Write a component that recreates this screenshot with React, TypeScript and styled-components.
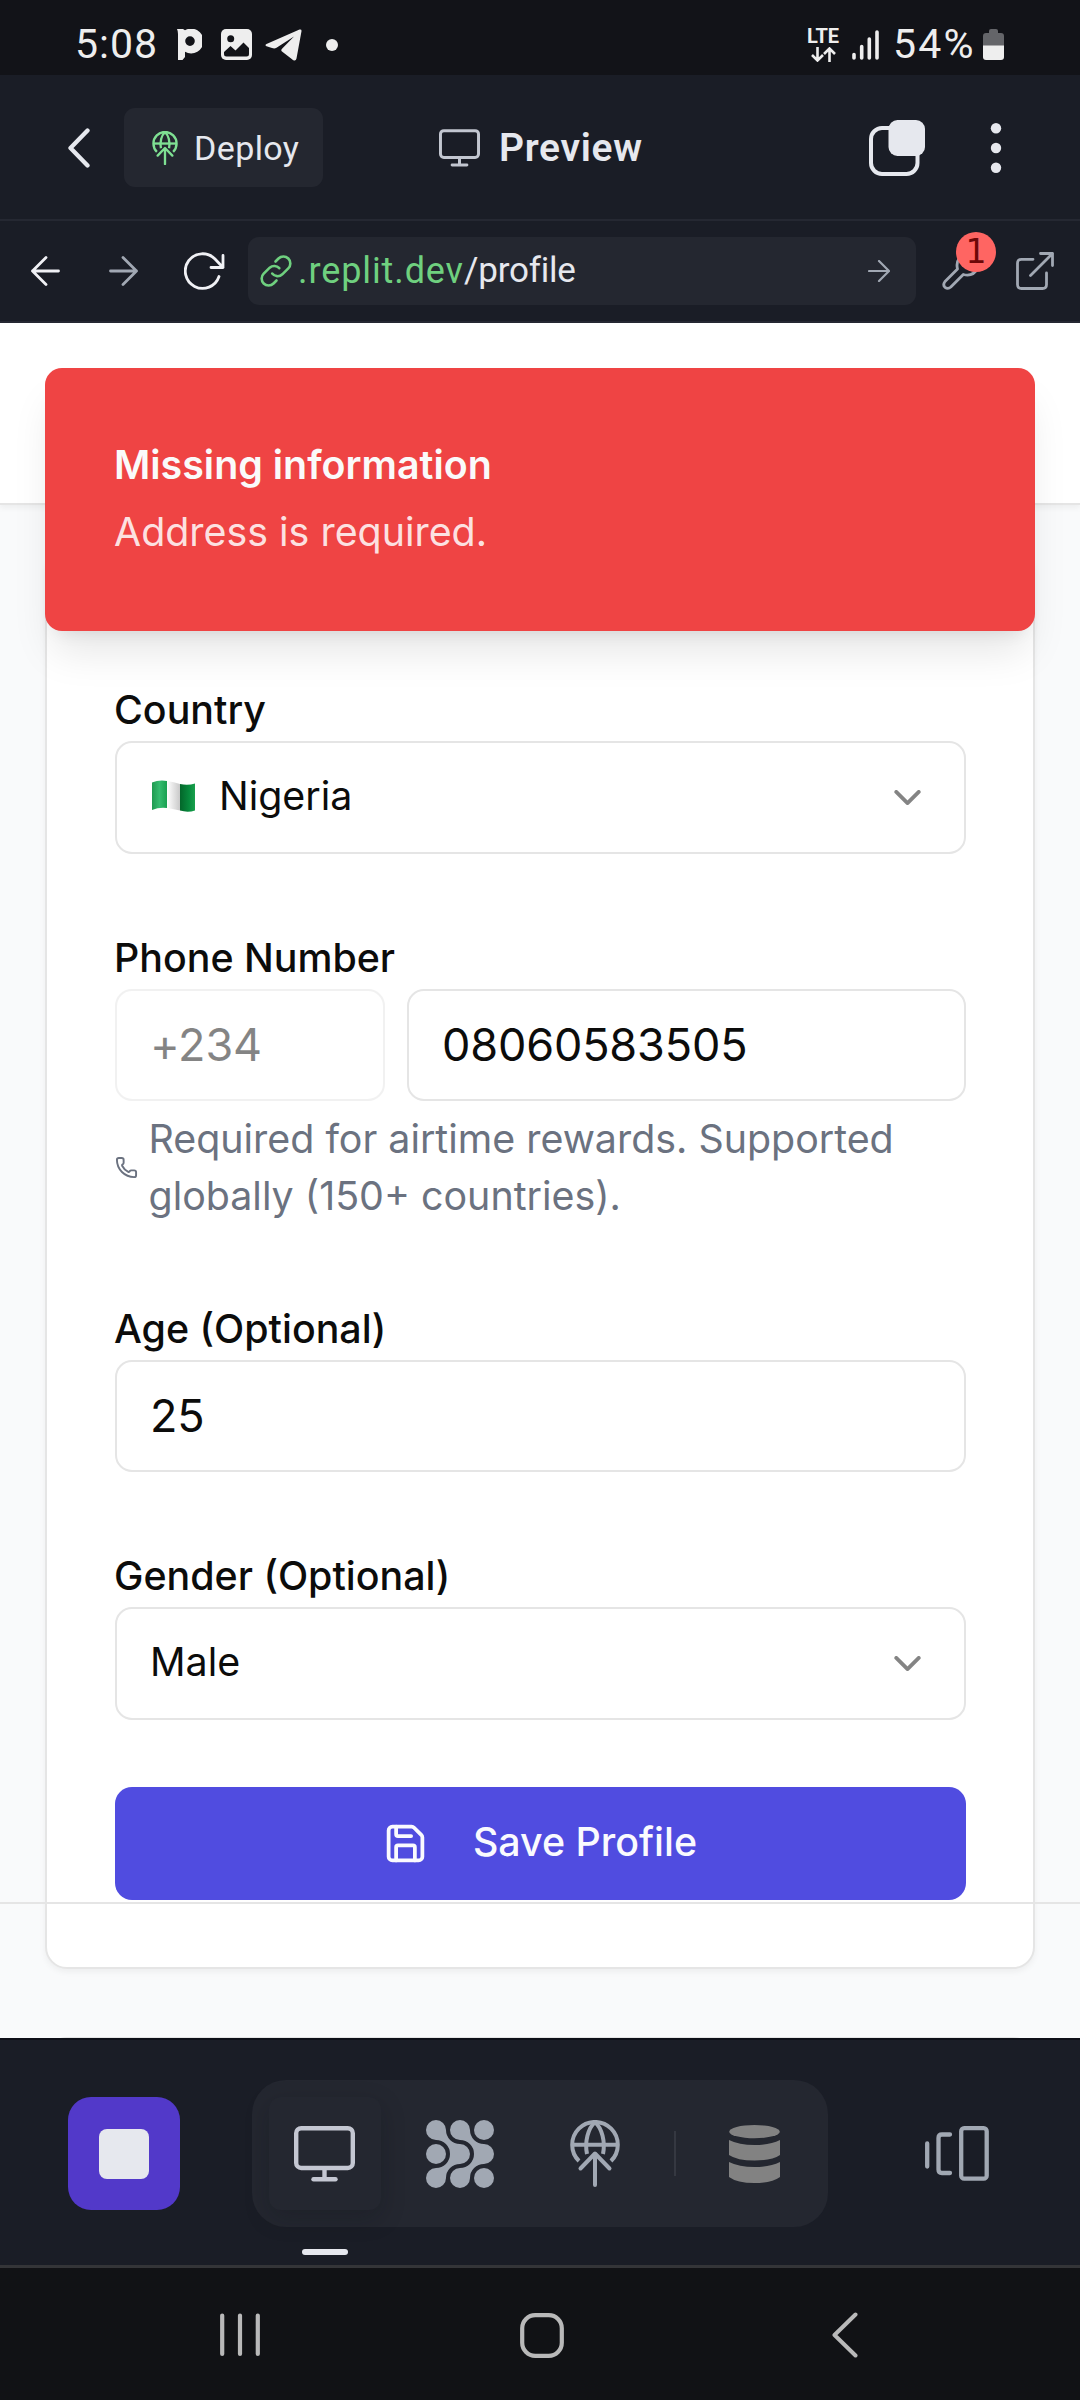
import React from 'react';
import styled, { createGlobalStyle } from 'styled-components';
import { ChevronDown, Phone, Save } from 'lucide-react';

const ink = '#e6e8ee';
const muted = '#a1a8b3';
const panel = '#1a1d26';
const raised = '#242730';
const line = '#e5e5e5';

const GlobalStyle = createGlobalStyle`
  * { box-sizing: border-box; }
  body { margin: 0; background: ${panel}; }
  svg { display: block; flex: none; }
  button, input { font: inherit; border: 0; margin: 0; padding: 0; background: none; color: inherit; }
`;

const Screen = styled.div`
  width: 1080px;
  height: 2400px;
  display: flex;
  flex-direction: column;
  overflow: hidden;
  font-family: Inter, 'Liberation Sans', sans-serif;
`;

/* ---------- status bar ---------- */

const StatusBar = styled.div`
  flex: none;
  height: 75px;
  padding: 14px 76px 0 75px;
  display: flex;
  align-items: center;
  justify-content: space-between;
  background: #121318;
  color: #eee;
`;

const StatusGroup = styled.div`
  display: flex;
  align-items: center;
`;

const StatusText = styled.span<{ $width: number; $tracking: number }>`
  width: ${(p) => p.$width}px;
  margin-top: -2px;
  font: 400 41px/46px Roboto, sans-serif;
  letter-spacing: ${(p) => p.$tracking}px;
  white-space: nowrap;
`;

const Spacer = styled.span<{ $w: number }>`
  flex: none;
  width: ${(p) => p.$w}px;
`;

const Network = styled.div`
  width: 34px;
  height: 34px;
  display: flex;
  flex-direction: column;
  align-items: center;
  gap: 3px;
  font: 700 20px/16px Roboto, sans-serif;
`;

/* ---------- app header ---------- */

const Header = styled.header`
  flex: none;
  height: 146px;
  padding: 1px 78px 0 68px;
  display: flex;
  align-items: center;
  background: ${panel};
  border-bottom: 2px solid #252832;
`;

const DeployButton = styled.button`
  width: 199px;
  height: 79px;
  margin-left: 34px;
  padding: 0 0 0 28px;
  display: flex;
  align-items: center;
  gap: 16px;
  border-radius: 11px;
  background: ${raised};
  color: ${ink};
  font: 400 34px/40px Roboto, sans-serif;
  letter-spacing: 0.4px;
`;

const Title = styled.div`
  margin-left: 116px;
  display: flex;
  align-items: center;
  gap: 19px;
  color: ${ink};
  font: 600 39px/46px Roboto, sans-serif;
  letter-spacing: 0.7px;
`;

const HeaderActions = styled.div`
  margin-left: auto;
  display: flex;
  align-items: center;
  gap: 65px;
`;

/* ---------- address bar ---------- */

const AddressBar = styled.div`
  flex: none;
  height: 102px;
  padding: 0 26px 0 31px;
  display: flex;
  align-items: center;
  background: ${panel};
  border-bottom: 2px solid #252832;
`;

const AddressField = styled.div`
  width: 669px;
  height: 68px;
  margin-left: 23px;
  padding: 0 26px 0 12px;
  display: flex;
  align-items: center;
  border-radius: 11px;
  background: ${raised};
  color: ${ink};
  font: 400 36px/44px Roboto, sans-serif;
`;

const Host = styled.span`
  margin-left: 6px;
  color: #6fd07f;
  letter-spacing: 0.9px;
`;

const Path = styled.span`
  flex: 1;
  font-size: 35px;
  letter-spacing: -0.2px;
`;

const Tools = styled.div`
  position: relative;
  margin-left: 26px;
`;

const Badge = styled.span`
  position: absolute;
  left: 14px;
  top: -20px;
  width: 40px;
  height: 40px;
  border-radius: 50%;
  background: #ff6562;
  color: #6d0808;
  font: 400 33px/40px 'DejaVu Sans', sans-serif;
  text-align: center;
`;

/* ---------- previewed page ---------- */

const Viewport = styled.main`
  position: relative;
  flex: none;
  height: 1715px;
  display: flex;
  flex-direction: column;
  overflow: hidden;
  background: #f9fafb;
  color: #0c0c0b;
`;

const SiteNav = styled.div`
  flex: none;
  height: 182px;
  background: #fff;
  border-bottom: 2px solid ${line};
  box-shadow: 0 3px 6px rgba(0, 0, 0, 0.05);
`;

const Card = styled.section`
  flex: none;
  margin: 45px 45px 0;
  padding: 121px 67px 67px 68px;
  display: flex;
  flex-direction: column;
  gap: 67px;
  background: #fff;
  border: 2px solid ${line};
  border-radius: 22px;
  box-shadow: 0 3px 6px rgba(0, 0, 0, 0.05);
`;

const NextCard = styled.section`
  flex: none;
  height: 60px;
  margin: 68px 45px 0;
  background: #fff;
  border: 2px solid ${line};
  border-radius: 22px;
`;

const Toast = styled.div`
  position: absolute;
  left: 45px;
  right: 45px;
  top: 45px;
  height: 263px;
  padding: 69px;
  border-radius: 17px;
  background: #ef4444;
  box-shadow: 0 28px 42px -8px rgba(0, 0, 0, 0.1), 0 11px 17px -11px rgba(0, 0, 0, 0.1);
  font-size: 39.375px;
  line-height: 56px;
`;

const ToastTitle = styled.div`
  margin-bottom: 11px;
  color: #fafafa;
  font-weight: 600;
`;

const ToastText = styled.div`
  color: rgba(255, 255, 255, 0.86);
`;

const FooterRule = styled.div`
  position: absolute;
  left: 0;
  right: 0;
  top: 1579px;
  height: 2px;
  background: ${line};
`;

const Field = styled.div`
  display: flex;
  flex-direction: column;
`;

const Label = styled.label`
  height: 68px;
  padding-top: 9px;
  margin-left: -1px;
  font-size: 39.375px;
  font-weight: 500;
  line-height: 56px;
`;

const Select = styled.button`
  width: 100%;
  height: 113px;
  padding: 0 34px 4px 33px;
  display: flex;
  align-items: center;
  border: 2px solid ${line};
  border-radius: 17px;
  background: #fff;
  font-size: 39.375px;
  line-height: 56px;
`;

const SelectValue = styled.span`
  flex: 1;
  text-align: left;
`;

const ChevronSlot = styled.span`
  padding-top: 4px;
  opacity: 0.5;
`;

const InputRow = styled.div`
  display: flex;
  gap: 22px;
`;

const Input = styled.input<{ $width?: number }>`
  min-width: 0;
  ${(p) => (p.$width ? `flex: none; width: ${p.$width}px;` : 'flex: 1;')}
  height: 112px;
  padding: 0 34px 2px 33px;
  border: 2px solid ${line};
  border-radius: 17px;
  background: #fff;
  font-size: 45px;
  line-height: 68px;
  letter-spacing: -0.15px;
  &:disabled {
    opacity: 0.5;
    color: inherit;
  }
`;

const Hint = styled.div`
  height: 114px;
  margin-top: 10px;
  padding-bottom: 2px;
  display: flex;
  align-items: center;
  gap: 10.500px;
  color: #6b7280;
  font-size: 39.375px;
  line-height: 57px;
`;

const SaveButton = styled.button`
  width: 100%;
  height: 113px;
  padding-right: 1px;
  display: flex;
  align-items: center;
  justify-content: center;
  gap: 45px;
  border-radius: 17px;
  background: #504ce0;
  color: #fafafe;
  font-size: 39.375px;
  font-weight: 500;
  line-height: 56px;
`;

const SaveText = styled.span`
  padding-bottom: 4px;
`;

/* ---------- workspace dock ---------- */

const Dock = styled.div`
  flex: none;
  height: 230px;
  padding-left: 68px;
  display: flex;
  align-items: flex-start;
  background: ${panel};
  border-top: 2px solid #0e1018;
  border-bottom: 3px solid #343538;
`;

const StopButton = styled.button`
  width: 112px;
  height: 113px;
  margin-top: 57px;
  display: flex;
  align-items: center;
  justify-content: center;
  border-radius: 23px;
  background: #5239c9;
`;

const StopGlyph = styled.span`
  width: 50px;
  height: 50px;
  border-radius: 8px;
  background: ${ink};
`;

const TabGroup = styled.div`
  width: 576px;
  height: 147px;
  margin: 40px 0 0 72px;
  padding-left: 17px;
  display: flex;
  align-items: center;
  border-radius: 34px;
  background: ${raised};
`;

const ActiveTab = styled.div`
  position: relative;
  width: 112px;
  height: 113px;
  padding-right: 1px;
  display: flex;
  align-items: center;
  justify-content: center;
  border-radius: 12px;
  background: ${raised};
  box-shadow: 0 8px 24px rgba(10, 12, 20, 0.22);
`;

const TabIndicator = styled.span`
  position: absolute;
  left: 33px;
  top: 152px;
  width: 46px;
  height: 6px;
  border-radius: 3px;
  background: ${ink};
`;

const TabDivider = styled.span`
  width: 2px;
  height: 45px;
  margin: 0 53px 0 54px;
  background: #353841;
`;

const SwitcherSlot = styled.div`
  margin: 86px 0 0 97px;
`;

/* ---------- system navigation ---------- */

const SystemNav = styled.nav`
  flex: none;
  height: 132px;
  padding: 2px 222px 0 220px;
  display: flex;
  align-items: center;
  background: #111215;
`;

/* ---------- drawings ---------- */

const MonitorIcon = ({ w, h, s, color }: { w: number; h: number; s: number; color: string }) => (
  <svg width={w} height={h} viewBox="0 0 61 56" fill="none" stroke={color} strokeWidth={s}>
    <rect x="2.200" y="2.200" width="56.600" height="39.800" rx="5" />
    <path d="M30.500 42V53" />
    <path d="M19.500 53.300H41.500" strokeLinecap="round" />
  </svg>
);

const GlobeUpIcon = ({ w, h, color, s }: { w: number; h: number; color: string; s: number }) => (
  <svg width={w} height={h} viewBox="0 0 50 67" fill="none" stroke={color} strokeWidth={s}>
    <path d="M9 41 A22.800 22.800 0 1 1 41 41" />
    <path d="M2.500 24.700H47.500" />
    <path d="M25 2.200C18 8 14.500 22 17 34M25 2.200C32 8 35.500 22 33 34" />
    <path d="M25 34V65M10.500 48.500L25 33.500L39.500 48.500" strokeLinecap="round" strokeLinejoin="round" />
  </svg>
);

const AgentIcon = () => (
  <svg width="68" height="68" viewBox="-10 -10 68 68" fill={muted}>
    <path
      id="strand"
      d="M10 0A14 14 0 0 0 24 14A10 10 0 0 1 24 34A14 14 0 0 0 10 48A10 10 0 1 1 0 38A14 14 0 0 0 0 10A10 10 0 1 1 10 0Z"
    />
    <use href="#strand" x="24" />
    <circle cx="48" cy="0" r="10" />
    <circle cx="0" cy="24" r="10" />
    <circle cx="48" cy="48" r="10" />
  </svg>
);

const DatabaseIcon = () => (
  <svg width="51" height="58" viewBox="0 0 51 58" fill="#828282">
    <ellipse cx="25.500" cy="6.700" rx="25.300" ry="6.600" />
    <path d="M0 15Q10 20 25.500 20T51 15V30Q43 35.500 25.500 35.500T0 30Z" />
    <path d="M0 37Q10 42 25.500 42T51 37V52Q43 58 25.500 58T0 52Z" />
  </svg>
);

const FlagIcon = () => (
  <svg width="43" height="32" viewBox="0 0 43 32">
    <defs>
      <linearGradient id="hoist" x1="0" x2="1">
        <stop offset="0" stopColor="#1f9a50" />
        <stop offset="0.5" stopColor="#35bb6f" />
        <stop offset="1" stopColor="#18a050" />
      </linearGradient>
      <linearGradient id="band" x1="0" x2="1">
        <stop offset="0" stopColor="#fff" />
        <stop offset="1" stopColor="#c9c9c9" />
      </linearGradient>
      <linearGradient id="fly" x1="0" x2="1">
        <stop offset="0" stopColor="#03662a" />
        <stop offset="0.6" stopColor="#078a3d" />
        <stop offset="1" stopColor="#19a04c" />
      </linearGradient>
    </defs>
    <path d="M0 2.500Q7 -.4 15 1V28Q7 27 0 30Z" fill="url(#hoist)" />
    <path d="M15 1Q22 1.800 28 4V30.600Q22 29 15 28Z" fill="url(#band)" />
    <path d="M28 4Q36 5.600 43 3.500V30.500Q36 32.800 28 30.600Z" fill="url(#fly)" />
  </svg>
);

export default function App() {
  return (
    <Screen>
      <GlobalStyle />

      <StatusBar>
        <StatusGroup>
          <StatusText $width={102} $tracking={1}>5:08</StatusText>
          <svg width="25" height="31" viewBox="0 0 25 31" fill="#eee">
            <path fillRule="evenodd" d="M0 0H6L8 1.200A12.400 12.400 0 1 1 8 22.800V28L5.500 31H1V5Q1 2 0 0ZM13 7.300A4.800 4.800 0 1 0 13 16.900A4.800 4.800 0 1 0 13 7.300Z" />
          </svg>
          <Spacer $w={19} />
          <svg width="31" height="31" viewBox="0 0 31 31">
            <rect width="31" height="31" rx="5" fill="#eee" />
            <circle cx="9.700" cy="9.700" r="3.500" fill="#121318" />
            <path d="M3 23L9.500 17L14.500 21.500L22.500 13.500L28 19V25Q28 27.500 25.500 27.500H5.500Q3 27.500 3 25Z" fill="#121318" />
          </svg>
          <Spacer $w={13} />
          <svg width="37" height="32" viewBox="0 0 37 32" fill="#eee">
            <path d="M1.500 15L34.500 .6Q37 0 36.400 2.800L31.500 29.500Q30.800 32.500 28 31L17 22.500Q15.600 21.300 17 19.800L29 7.500L11.500 18.700Q9.500 20 7 19L1.500 17.300Q-.5 16.200 1.500 15Z" />
          </svg>
          <Spacer $w={24} />
          <svg width="12" height="12" viewBox="0 0 12 12" fill="#eee">
            <circle cx="6" cy="6" r="6" />
          </svg>
        </StatusGroup>
        <StatusGroup>
          <Network>
            LTE
            <svg width="25" height="15" viewBox="0 0 25 15" fill="none" stroke="#eee" strokeWidth="2.600">
              <path d="M6.500 0V13.500M1 8L6.500 13.500L12 8M18.500 15V1.500M13 7L18.500 1.500L24 7" />
            </svg>
          </Network>
          <Spacer $w={12} />
          <svg width="27" height="30" viewBox="0 0 27 30" fill="none" stroke="#eee" strokeWidth="3.600" strokeLinecap="round">
            <path d="M2 24.500V28M9.700 16.500V28M17.300 9V28M25 2V28" />
          </svg>
          <Spacer $w={14} />
          <StatusText $width={90} $tracking={2.2}>54%</StatusText>
          <svg width="21" height="31" viewBox="0 0 21 31">
            <path d="M6 4V2Q6 0 8 0H13Q15 0 15 2V4H18Q21 4 21 7V17H0V7Q0 4 3 4Z" fill="#646569" />
            <path d="M0 16.500H21V28Q21 31 18 31H3Q0 31 0 28Z" fill="#eee" />
          </svg>
        </StatusGroup>
      </StatusBar>

      <Header>
        <svg width="22" height="40" viewBox="0 0 22 40" fill="none" stroke={ink} strokeWidth="4.300" strokeLinecap="round" strokeLinejoin="round">
          <path d="M19.500 2.500L2.500 20L19.500 37.500" />
        </svg>
        <DeployButton>
          <GlobeUpIcon w={26} h={34} color="#7fe093" s={4.6} />
          Deploy
        </DeployButton>
        <Title>
          <MonitorIcon w={41} h={38} s={4.4} color="#c2c6d0" />
          Preview
        </Title>
        <HeaderActions>
          <svg width="56" height="56" viewBox="0 0 56 56">
            <rect x="2" y="8" width="46.500" height="46" rx="11" fill="none" stroke={ink} strokeWidth="4" />
            <rect x="19.500" y="0" width="36.500" height="36" rx="9" fill={ink} />
          </svg>
          <svg width="12" height="50" viewBox="0 0 12 50" fill={ink}>
            <circle cx="6" cy="5.300" r="5.200" />
            <circle cx="6" cy="25" r="5.200" />
            <circle cx="6" cy="44.700" r="5.200" />
          </svg>
        </HeaderActions>
      </Header>

      <AddressBar>
        <svg width="29" height="30" viewBox="0 0 29 30" fill="none" stroke="#f0f1f5" strokeWidth="2.800" strokeLinecap="round" strokeLinejoin="round">
          <path d="M27.500 15H1.500M15 1.500L1.500 15L15 28.500" />
        </svg>
        <Spacer $w={49} />
        <svg width="29" height="30" viewBox="0 0 29 30" fill="none" stroke={muted} strokeWidth="2.800" strokeLinecap="round" strokeLinejoin="round">
          <path d="M1.500 15H27.500M14 1.500L27.500 15L14 28.500" />
        </svg>
        <Spacer $w={46} />
        <svg width="41" height="38" viewBox="0 0 41 38" fill="none" stroke="#f0f1f5" strokeWidth="2.800" strokeLinecap="round" strokeLinejoin="round">
          <path d="M35 24.500A17.300 17.300 0 1 1 31 7L39 15.500M39 3.500V15.500H27" />
        </svg>
        <AddressField>
          <svg width="32" height="32" viewBox="0 0 32 32" fill="none" stroke="#6fd07f" strokeWidth="2.600" strokeLinecap="round">
            <path d="M15.500 6.500L18.500 3.500A6.800 6.800 0 0 1 28.300 13.300L22.300 19.300A6.800 6.800 0 0 1 12.200 18.500" />
            <path d="M16.500 25.500L13.500 28.500A6.800 6.800 0 0 1 3.700 18.700L9.700 12.700A6.800 6.800 0 0 1 19.300 13.200" />
          </svg>
          <Host>.replit.dev</Host>
          <Path>/profile</Path>
          <svg width="22" height="22" viewBox="0 0 22 22" fill="none" stroke={muted} strokeWidth="2.200" strokeLinecap="round" strokeLinejoin="round">
            <path d="M1 11H21M11 1L21 11L11 21" />
          </svg>
        </AddressField>
        <Tools>
          <svg width="40" height="38" viewBox="0 0 40 38" fill="none" stroke={muted} strokeWidth="2.800" strokeLinecap="round" strokeLinejoin="round">
            <path d="M23.500 2.500Q13 6 15.500 17L3 29.500Q.500 33 3 35.300Q6 37.500 8.800 35L21.300 22.500Q31 25 35.500 16.500" />
          </svg>
          <Badge>1</Badge>
        </Tools>
        <Spacer $w={34} />
        <svg width="38" height="38" viewBox="0 0 38 38" fill="none" stroke={muted} strokeWidth="2.800" strokeLinecap="round" strokeLinejoin="round">
          <path d="M17 7.300H5.500Q1.500 7.300 1.500 11.300V32.500Q1.500 36.500 5.500 36.500H26.500Q30.500 36.500 30.500 32.500V21M24.500 1.500H36.500V13.500M36.500 1.500L14.500 23.500" />
        </svg>
      </AddressBar>

      <Viewport>
        <SiteNav />
        <Card>
          <Field>
            <Label>Country</Label>
            <Select>
              <Spacer $w={2} />
              <FlagIcon />
              <Spacer $w={24} />
              <SelectValue>Nigeria</SelectValue>
              <ChevronSlot>
                <ChevronDown size={45} strokeWidth={2} />
              </ChevronSlot>
            </Select>
          </Field>
          <Field>
            <Label>Phone Number</Label>
            <InputRow>
              <Input $width={270} disabled defaultValue="+234" />
              <Input defaultValue="08060583505" />
            </InputRow>
            <Hint>
              <Phone size={23} strokeWidth={2} />
              <span>
                Required for airtime rewards. Supported
                <br />
                globally (150+ countries).
              </span>
            </Hint>
          </Field>
          <Field>
            <Label>Age (Optional)</Label>
            <InputRow>
              <Input defaultValue="25" />
            </InputRow>
          </Field>
          <Field>
            <Label>Gender (Optional)</Label>
            <Select>
              <SelectValue>Male</SelectValue>
              <ChevronSlot>
                <ChevronDown size={45} strokeWidth={2} />
              </ChevronSlot>
            </Select>
          </Field>
          <SaveButton>
            <Save size={45} strokeWidth={2} />
            <SaveText>Save Profile</SaveText>
          </SaveButton>
        </Card>
        <NextCard />
        <FooterRule />
        <Toast>
          <ToastTitle>Missing information</ToastTitle>
          <ToastText>Address is required.</ToastText>
        </Toast>
      </Viewport>

      <Dock>
        <StopButton>
          <StopGlyph />
        </StopButton>
        <TabGroup>
          <ActiveTab>
            <MonitorIcon w={61} h={56} s={4.400} color="#c4c7d2" />
            <TabIndicator />
          </ActiveTab>
          <Spacer $w={45} />
          <AgentIcon />
          <Spacer $w={76} />
          <GlobeUpIcon w={50} h={67} color={muted} s={4} />
          <TabDivider />
          <DatabaseIcon />
        </TabGroup>
        <SwitcherSlot>
          <svg width="64" height="56" viewBox="0 0 64 56" fill="none" stroke={muted} strokeWidth="4.300" strokeLinecap="round" strokeLinejoin="round">
            <path d="M2.200 17.500V40.500M25 8.500H17Q13.500 8.500 13.500 12V43.500Q13.500 47 17 47H25" />
            <rect x="36.200" y="2.200" width="25.500" height="50.500" rx="3" />
          </svg>
        </SwitcherSlot>
      </Dock>

      <SystemNav>
        <svg width="40" height="44" viewBox="0 0 40 44" stroke="#b9b9b9" strokeWidth="4.200" strokeLinecap="round">
          <path d="M2.200 2.500V41M20 2.500V41M37.800 2.500V41" />
        </svg>
        <Spacer $w={260} />
        <svg width="44" height="45" viewBox="0 0 44 45" fill="none" stroke="#b9b9b9" strokeWidth="4.200">
          <rect x="2.200" y="2.200" width="39.600" height="40.600" rx="13" />
        </svg>
        <Spacer $w={268} />
        <svg width="26" height="46" viewBox="0 0 26 46" fill="none" stroke="#b9b9b9" strokeWidth="4" strokeLinecap="round" strokeLinejoin="round">
          <path d="M23.500 2.500L2.500 23L23.500 43.500" />
        </svg>
      </SystemNav>
    </Screen>
  );
}
